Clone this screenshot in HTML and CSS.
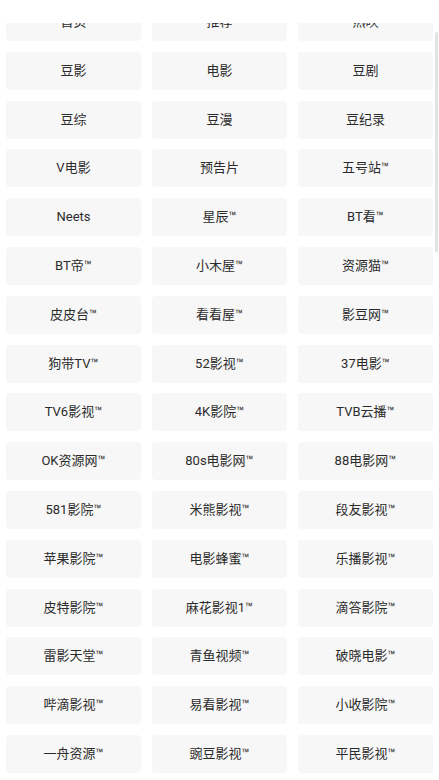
FILE: index.html
```html
<!DOCTYPE html>
<html lang="zh-CN">
<head>
    <meta charset="UTF-8">
    <meta name="viewport" content="width=device-width, initial-scale=1.0">
    <title>站点列表</title>
    <link rel="stylesheet" href="styles.css">
</head>
<body>
    <div class="top-mask"></div>
    <div class="scroll-thumb"></div>

    <div class="site-grid">
        <div class="site">首页</div>
        <div class="site">推荐</div>
        <div class="site">热映</div>

        <div class="site">豆影</div>
        <div class="site">电影</div>
        <div class="site">豆剧</div>

        <div class="site">豆综</div>
        <div class="site">豆漫</div>
        <div class="site">豆纪录</div>

        <div class="site">V电影</div>
        <div class="site">预告片</div>
        <div class="site">五号站<span class="tm">™</span></div>

        <div class="site">Neets</div>
        <div class="site">星辰<span class="tm">™</span></div>
        <div class="site">BT看<span class="tm">™</span></div>

        <div class="site">BT帝<span class="tm">™</span></div>
        <div class="site">小木屋<span class="tm">™</span></div>
        <div class="site">资源猫<span class="tm">™</span></div>

        <div class="site">皮皮台<span class="tm">™</span></div>
        <div class="site">看看屋<span class="tm">™</span></div>
        <div class="site">影豆网<span class="tm">™</span></div>

        <div class="site">狗带TV<span class="tm">™</span></div>
        <div class="site">52影视<span class="tm">™</span></div>
        <div class="site">37电影<span class="tm">™</span></div>

        <div class="site">TV6影视<span class="tm">™</span></div>
        <div class="site">4K影院<span class="tm">™</span></div>
        <div class="site">TVB云播<span class="tm">™</span></div>

        <div class="site">OK资源网<span class="tm">™</span></div>
        <div class="site">80s电影网<span class="tm">™</span></div>
        <div class="site">88电影网<span class="tm">™</span></div>

        <div class="site">581影院<span class="tm">™</span></div>
        <div class="site">米熊影视<span class="tm">™</span></div>
        <div class="site">段友影视<span class="tm">™</span></div>

        <div class="site">苹果影院<span class="tm">™</span></div>
        <div class="site">电影蜂蜜<span class="tm">™</span></div>
        <div class="site">乐播影视<span class="tm">™</span></div>

        <div class="site">皮特影院<span class="tm">™</span></div>
        <div class="site">麻花影视1<span class="tm">™</span></div>
        <div class="site">滴答影院<span class="tm">™</span></div>

        <div class="site">雷影天堂<span class="tm">™</span></div>
        <div class="site">青鱼视频<span class="tm">™</span></div>
        <div class="site">破晓电影<span class="tm">™</span></div>

        <div class="site">哔滴影视<span class="tm">™</span></div>
        <div class="site">易看影视<span class="tm">™</span></div>
        <div class="site">小收影院<span class="tm">™</span></div>

        <div class="site">一舟资源<span class="tm">™</span></div>
        <div class="site">豌豆影视<span class="tm">™</span></div>
        <div class="site">平民影视<span class="tm">™</span></div>
    </div>
</body>
</html>
```

FILE: styles.css
```css
body {
    margin: 0;
    background: #ffffff;
    font-family: Roboto, "Noto Sans CJK SC", sans-serif;
    color: #2b2b2b;
    overflow: hidden;
}

.top-mask {
    position: fixed;
    top: 0;
    left: 0;
    right: 0;
    height: 23px;
    background: #ffffff;
    z-index: 2;
}

.scroll-thumb {
    position: fixed;
    top: 32px;
    right: 1px;
    width: 3px;
    height: 220px;
    background: #e2e2e2;
    border-radius: 2px;
    z-index: 3;
}

.site-grid {
    display: grid;
    grid-template-columns: repeat(3, 1fr);
    column-gap: 11px;
    row-gap: 10.8px;
    padding: 3px 6px 20px;
}

.site {
    height: 38px;
    line-height: 38px;
    text-align: center;
    background: #f7f7f7;
    border-radius: 4px;
    font-size: 13px;
    white-space: nowrap;
}

.tm {
    font-size: 13px;
}
```
